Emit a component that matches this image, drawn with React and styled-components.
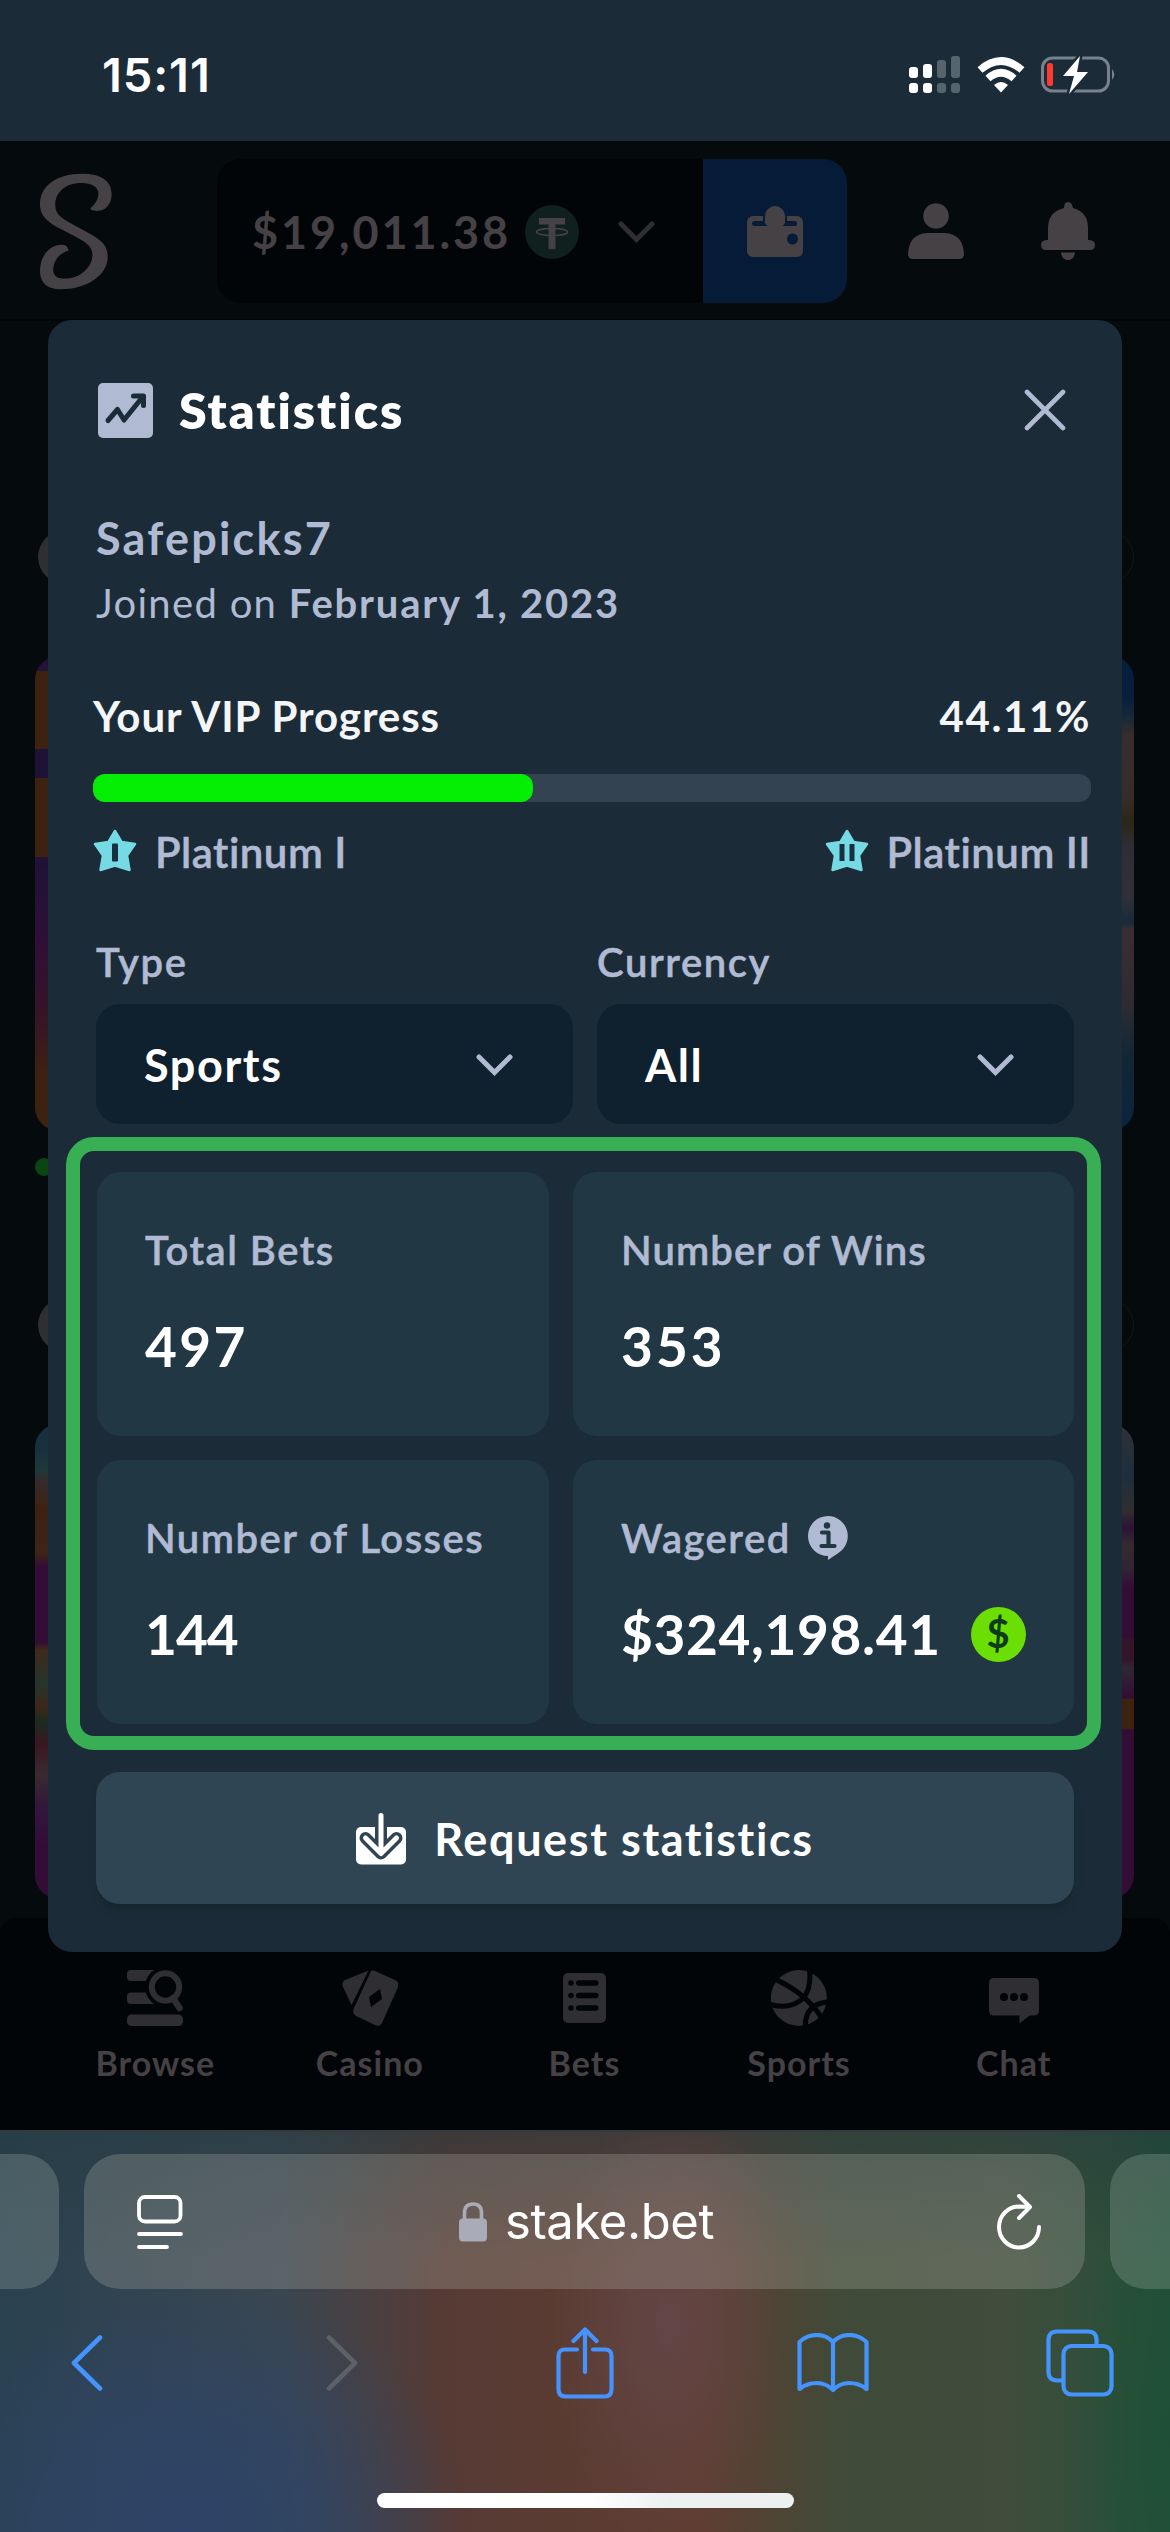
import React from 'react'
import styled, { createGlobalStyle } from 'styled-components'

const App = () =>
    <Page>
        <GlobalStyle />
        <StatusBar>
            <Clock>15:11</Clock>
            <StatusIcons>
                <SignalIcon />
                <WifiIcon />
                <BatteryIcon />
            </StatusIcons>
        </StatusBar>
        <Site>
            <TopBar>
                <LogoIcon />
                <Balance>
                    <Amount>$19,011.38</Amount>
                    <TetherIcon />
                    <Chevron width='37' color='#2e2e33' thick={5} />
                </Balance>
                <WalletButton><WalletIcon /></WalletButton>
                <UserIcon />
                <BellIcon />
            </TopBar>
            <Lobby>
                <LobbyHead><Dot /><Pill /></LobbyHead>
                <GameRow $height={475}>
                    <Game $art={artOne} />
                    <Game $art={artTwo} />
                </GameRow>
                <Online />
                <LobbyHead><Dot /><Pill /></LobbyHead>
                <GameRow $height={475}>
                    <Game $art={artThree} />
                    <Game $art={artFour} />
                </GameRow>
            </Lobby>
            <BottomNav>
                <NavItem><BrowseIcon />Browse</NavItem>
                <NavItem><CasinoIcon />Casino</NavItem>
                <NavItem><BetsIcon />Bets</NavItem>
                <NavItem><SportsIcon />Sports</NavItem>
                <NavItem><ChatIcon />Chat</NavItem>
            </BottomNav>
            <Modal>
                <ModalHeader>
                    <TrendIcon />
                    <Title>Statistics</Title>
                    <CloseIcon />
                </ModalHeader>
                <UserName>Safepicks7</UserName>
                <Joined>Joined on <b>February 1, 2023</b></Joined>
                <Vip>
                    <VipRow>
                        <VipText $spacing={0.9}>Your VIP Progress</VipText>
                        <VipText $spacing={1.6}>44.11%</VipText>
                    </VipRow>
                    <Track><Fill style={{ width: '44.11%' }} /></Track>
                    <VipRow>
                        <Level><StarIcon bars={1} />Platinum I</Level>
                        <Level><StarIcon bars={2} />Platinum II</Level>
                    </VipRow>
                </Vip>
                <Filters>
                    <Field>
                        <Label>Type</Label>
                        <Select>Sports<Chevron width='37' color='#b1bad3' thick={5} /></Select>
                    </Field>
                    <Field>
                        <Label>Currency</Label>
                        <Select>All<Chevron width='37' color='#b1bad3' thick={5} /></Select>
                    </Field>
                </Filters>
                <Highlight>
                    <Card>
                        <CardLabel>Total Bets</CardLabel>
                        <CardValue $spacing={2.4}>497</CardValue>
                    </Card>
                    <Card>
                        <CardLabel $spacing={1.1}>Number of Wins</CardLabel>
                        <CardValue $spacing={3}>353</CardValue>
                    </Card>
                    <Card>
                        <CardLabel>Number of Losses</CardLabel>
                        <CardValue $spacing={-1}>144</CardValue>
                    </Card>
                    <Card>
                        <CardLabel>Wagered<InfoIcon /></CardLabel>
                        <CardValue $spacing={0.6}>$324,198.41<Coin>$</Coin></CardValue>
                    </Card>
                </Highlight>
                <RequestButton><DownloadIcon />Request statistics</RequestButton>
            </Modal>
        </Site>
        <Browser>
            <Tabs>
                <SideTab $side='left' />
                <AddressBar>
                    <ReaderIcon />
                    <Address><LockIcon />stake.bet</Address>
                    <ReloadIcon />
                </AddressBar>
                <SideTab $side='right' />
            </Tabs>
            <Toolbar>
                <BackIcon />
                <ForwardIcon />
                <ShareIcon />
                <BookIcon />
                <TabsIcon />
            </Toolbar>
            <HomeIndicator />
        </Browser>
    </Page>

export default App

const SignalIcon = () =>
    <svg width='52' height='38' viewBox='0 0 52 38'>
        <g fill='#fff'>
            <rect x='0' y='11' width='9' height='11' rx='3' />
            <rect x='14' y='8' width='9' height='14' rx='3' />
            <rect x='0' y='27' width='9' height='10' rx='3' />
            <rect x='14' y='27' width='9' height='10' rx='3' />
        </g>
        <g fill='#55646d'>
            <rect x='28' y='4' width='9' height='18' rx='3' />
            <rect x='42' y='0' width='9' height='22' rx='3' />
            <rect x='28' y='27' width='9' height='10' rx='3' />
            <rect x='42' y='27' width='9' height='10' rx='3' />
        </g>
    </svg>

const WifiIcon = () =>
    <svg width='48' height='36' viewBox='0 0 48 36'>
        <g fill='none' stroke='#fff' strokeWidth='7.5'>
            <path d='M3 13 Q24 -5 45 13' />
            <path d='M11 21.500 Q24 10 37 21.500' />
        </g>
        <path fill='#fff' d='M24 35.500 L17 28 Q24 22 31 28 Z' />
    </svg>

const BatteryIcon = () =>
    <svg width='76' height='40' viewBox='0 0 76 40'>
        <rect x='1.500' y='3' width='66' height='33' rx='10' fill='none' stroke='#78818c' strokeWidth='3' />
        <path d='M71 14 Q75.500 19.500 71 25 Z' fill='#78818c' />
        <rect x='6' y='8' width='6' height='23' rx='2.500' fill='#ff3b30' />
        <path d='M39 1 L22 21 H33 L28 39 L47 17 H36 Z' fill='#fff' stroke='#1b2c38' strokeWidth='5' paintOrder='stroke' strokeLinejoin='round' />
    </svg>

const LogoIcon = () =>
    <svg width='72' height='117' viewBox='60 67 217 350'>
        <path fill='#454144' d='M212 172 C225 160 236 145 236 128 C236 108 215 96 185 96 C135 96 106 125 106 162 C106 195 130 205 180 232 C235 262 264 275 264 318 C264 375 200 416 122 416 C80 416 60 395 60 360 C60 315 90 282 125 282 C138 282 144 288 146 300 C120 305 100 330 100 358 C100 375 112 384 135 384 C180 384 218 350 218 312 C218 285 195 272 150 249 C95 220 60 205 60 160 C60 105 110 68 185 68 C245 68 276 90 276 130 C276 160 258 180 232 180 C220 180 212 178 212 172 Z' />
    </svg>

const TetherIcon = () =>
    <svg width='54' height='54' viewBox='0 0 54 54'>
        <circle cx='27' cy='27' r='27' fill='#10201f' />
        <path d='M14 13 H40 V19.500 H30.500 V44 H23.500 V19.500 H14 Z' fill='#454144' />
        <ellipse cx='27' cy='27' rx='15.500' ry='3.500' fill='none' stroke='#454144' strokeWidth='1.600' />
    </svg>

const Chevron = ({ width, color, thick }) =>
    <svg width={width} height='22' viewBox='0 0 37 22'>
        <path d='M3 3 L18.500 18.500 L34 3' fill='none' stroke={color} strokeWidth={thick} strokeLinecap='round' />
    </svg>

const WalletIcon = () =>
    <svg width='56' height='51' viewBox='0 0 56 51'>
        <rect x='0' y='10' width='56' height='41' rx='6' fill='#454144' />
        <path d='M8 15 H48 Q50 15 50 17.500 Q50 20 48 20 H8 Q5 20 5 17.500 Q5 15 8 15 Z' fill='#051b38' />
        <path d='M16 20 V10 A12 12 0 0 1 40 10 V20 Z' fill='#051b38' />
        <path d='M18 17 V10 A10 10 0 0 1 38 10 V17 Q36 22 28 22 Q20 22 18 17 Z' fill='#454144' />
        <circle cx='45.500' cy='33' r='5.500' fill='#051b38' />
    </svg>

const UserIcon = () =>
    <svg width='56' height='56' viewBox='0 0 56 56'>
        <circle cx='28' cy='13' r='12.800' fill='#454144' />
        <path d='M19 30 H37 Q55 31 56 51 Q56 56 51 56 H5 Q0 56 0 51 Q1 31 19 30 Z' fill='#454144' />
    </svg>

const BellIcon = () =>
    <svg width='54' height='58' viewBox='0 0 54 58'>
        <path d='M23 6 Q23 0 27 0 Q31 0 32 6 Q47 10 47 26 V38 Q54 38 54 43 Q54 48 49 48 H5 Q0 48 0 43 Q0 38 7 38 V26 Q7 10 23 6 Z' fill='#454144' />
        <path d='M20 50.500 H34 Q33 58 27 58 Q21 58 20 50.500 Z' fill='#454144' />
    </svg>

const BrowseIcon = () =>
    <svg width='56' height='56' viewBox='0 0 56 56'>
        <rect x='0' y='0' width='30' height='11' rx='4' fill='#2e2e33' />
        <rect x='0' y='22.500' width='30' height='11.500' rx='4' fill='#2e2e33' />
        <rect x='0' y='44.500' width='56' height='11.500' rx='4.500' fill='#2e2e33' />
        <circle cx='38.500' cy='17' r='20.500' fill='#020507' />
        <circle cx='38.500' cy='17' r='13.700' fill='none' stroke='#2e2e33' strokeWidth='6' />
        <path d='M46 28 L52.500 38' stroke='#2e2e33' strokeWidth='6.500' strokeLinecap='round' />
    </svg>

const CasinoIcon = () =>
    <svg width='56' height='56' viewBox='0 0 56 56'>
        <path d='M26.500 0.500 L3 10 Q-1 12 1 17 L9.500 35 Z' fill='#2e2e33' />
        <path fillRule='evenodd' d='M29 1 Q31 0 33 1 L53 10 Q57.500 12 56 17 L40 53 Q38 57 34 55.500 L14 46 Q10 44 11.500 39 Z M38 19 L27 27 L29 37 L40 29 Z' fill='#2e2e33' />
    </svg>

const BetsIcon = () =>
    <svg width='43' height='56' viewBox='0 -3 43 56'>
        <rect width='43' height='50' rx='5' fill='#2e2e33' />
        <g fill='#020507'>
            {[10, 22.500, 35].map(y => <g key={y}>
                <circle cx='8' cy={y} r='2.800' />
                <rect x='13' y={y - 2.700} width='22.500' height='5.400' rx='2.700' />
            </g>)}
        </g>
    </svg>

const SportsIcon = () =>
    <svg width='56' height='56' viewBox='760 60 167 167'>
        <circle cx='843' cy='143.500' r='83.500' fill='#2e2e33' />
        <g fill='none' stroke='#020507' strokeWidth='15'>
            <path d='M774 88 Q865 130 912 204' />
            <path d='M874 55 Q882 110 858 142 Q820 180 758 163' />
            <path d='M862 232 Q860 160 932 155' />
        </g>
    </svg>

const ChatIcon = () =>
    <svg width='50' height='56' viewBox='0 -8 50 56'>
        <path d='M5 0 H45 Q50 0 50 5 V32 Q50 37.500 45 37.500 H40.500 L30.500 45.500 V37.500 H5 Q0 37.500 0 32 V5 Q0 0 5 0 Z' fill='#2e2e33' />
        <g fill='#020507'>
            <circle cx='15' cy='19' r='4' />
            <circle cx='25' cy='19' r='4' />
            <circle cx='35' cy='19' r='4' />
        </g>
    </svg>

const TrendIcon = () =>
    <svg width='55' height='55' viewBox='0 0 55 55'>
        <rect width='55' height='55' rx='5' fill='#b1bad3' />
        <path d='M10 37.500 L19.500 26.500 L26 37 L43 16' fill='none' stroke='#1b2c38' strokeWidth='5' strokeLinecap='round' strokeLinejoin='round' />
        <path d='M35.500 13 H45.500 V22.500' fill='none' stroke='#1b2c38' strokeWidth='5' strokeLinecap='round' strokeLinejoin='round' />
    </svg>

const CloseIcon = () =>
    <svg width='42' height='42' viewBox='0 0 42 42'>
        <path d='M3 3 L39 39 M39 3 L3 39' stroke='#b1bad3' strokeWidth='4.600' strokeLinecap='round' />
    </svg>

const StarIcon = ({ bars }) =>
    <svg width='44' height='43' viewBox='0 0 44 43'>
        <path d='M22 2 L28.500 13 L42 15 L34 26.500 L36.500 41 L22 36.500 L7.500 41 L10 26.500 L2 15 L15.500 13 Z' fill='#76dae5' stroke='#76dae5' strokeWidth='2.500' strokeLinejoin='round' />
        {bars === 1
            ? <rect x='19' y='14.500' width='6' height='18' rx='1' fill='#17303f' />
            : <path d='M14.500 15 H19.500 V32 H14.500 Z M24.500 15 H29.500 V32 H24.500 Z' fill='#17303f' />}
    </svg>

const InfoIcon = () =>
    <svg width='40' height='44' viewBox='0 0 40 44'>
        <path d='M20 0 A20 20 0 0 1 30 37.200 L20 44 L20 40 A20 20 0 0 1 20 0 Z' fill='#b1bad3' />
        <circle cx='19' cy='9.500' r='3.200' fill='#213743' />
        <path d='M14 16.500 H20.500 V29.500 M13.500 30 H26.500' fill='none' stroke='#213743' strokeWidth='4.200' strokeLinecap='round' strokeLinejoin='round' />
    </svg>

const DownloadIcon = () =>
    <svg width='50' height='52' viewBox='0 0 50 52'>
        <rect y='14' width='50' height='37.500' rx='5' fill='#fff' />
        <path d='M25 11 V38 M9.500 25 L25 40.500 L40.500 25' fill='none' stroke='#2f4553' strokeWidth='12' strokeLinecap='round' strokeLinejoin='round' />
        <path d='M25 2.500 V38 M9.500 25 L25 40.500 L40.500 25' fill='none' stroke='#fff' strokeWidth='5' strokeLinecap='round' strokeLinejoin='round' />
    </svg>

const ReaderIcon = () =>
    <svg width='46' height='54' viewBox='0 0 46 54'>
        <rect x='2' y='2' width='41.500' height='24.500' rx='6' fill='none' stroke='#fff' strokeWidth='3.800' />
        <path d='M2 39 H44 M2 52 H30' stroke='#fff' strokeWidth='3.800' strokeLinecap='round' />
    </svg>

const LockIcon = () =>
    <svg width='28' height='40' viewBox='0 0 28 40'>
        <path d='M5.500 19 V11 Q5.500 2 14 2 Q22.500 2 22.500 11 V19' fill='none' stroke='#a9acb8' strokeWidth='3.600' />
        <rect y='16.500' width='28' height='23' rx='4' fill='#a9acb8' />
    </svg>

const ReloadIcon = () =>
    <svg width='46' height='56' viewBox='0 0 46 56'>
        <g fill='none' stroke='#fff' strokeWidth='4' strokeLinecap='round'>
            <path d='M42 33 A20 20.500 0 1 1 22 12.500 L32 13' />
            <path d='M22 2 L33 13 L22 24' strokeLinejoin='round' />
        </g>
    </svg>

const BackIcon = () =>
    <svg width='32' height='56' viewBox='0 0 32 56'>
        <path d='M29 2.500 L3 28 L29 53.500' fill='none' stroke='#4594fe' strokeWidth='4.600' strokeLinecap='round' strokeLinejoin='round' />
    </svg>

const ForwardIcon = () =>
    <svg width='32' height='56' viewBox='0 0 32 56'>
        <path d='M3 2.500 L29 28 L3 53.500' fill='none' stroke='#5c6067' strokeWidth='4.600' strokeLinecap='round' strokeLinejoin='round' />
    </svg>

const ShareIcon = () =>
    <svg width='58' height='72' viewBox='0 0 58 72'>
        <g fill='none' stroke='#4594fe' strokeWidth='4.200' strokeLinecap='round' strokeLinejoin='round'>
            <path d='M21 22.500 H9 Q2.500 22.500 2.500 29 V62 Q2.500 69.500 9 69.500 H49 Q55.500 69.500 55.500 62 V29 Q55.500 22.500 49 22.500 H37' />
            <path d='M29 45 V3 M17.500 14 L29 2.500 L40.500 14' />
        </g>
    </svg>

const BookIcon = () =>
    <svg width='72' height='60' viewBox='0 0 72 60'>
        <path d='M36 9 Q29 2 20 2 Q10 2 2.500 9 V56 Q10 50 20 50 Q29 50 36 57 Q43 50 52 50 Q62 50 69.500 56 V9 Q62 2 52 2 Q43 2 36 9 Z M36 9 V57' fill='none' stroke='#4594fe' strokeWidth='4.200' strokeLinejoin='round' />
    </svg>

const TabsIcon = () =>
    <svg width='68' height='68' viewBox='0 0 68 68'>
        <g fill='none' stroke='#4594fe' strokeWidth='4.200'>
            <rect x='17.500' y='17' width='48' height='48.500' rx='8' />
            <path d='M17.500 51.500 H11 Q2.500 51.500 2.500 43 V11 Q2.500 2.500 11 2.500 H42 Q50.500 2.500 50.500 11 V17' />
        </g>
    </svg>

const artOne = 'linear-gradient(#25123a 0 15px, #3d2211 15px 93px, #1e1236 93px 122px, #3d2211 122px 201px, #1e1236 201px, #300f35 290px, #351426 360px, #3d2211 420px)'
const artTwo = 'linear-gradient(#061f3c 0 40px, #14273a 58px, #372d2c 80px, #362d2b 140px, #2c2618 165px, #2f2d34 190px, #30303a 240px, #172b39 266px, #3a2e33 274px, #2d2b33 350px, #112735 400px, #0b2340)'
const artThree = 'linear-gradient(#18303e 0 24px, #1d3937 46px, #352a2c 58px, #3d2211 84px, #3d2419 130px, #330d35 142px 218px, #3d2a1b 226px, #27352c 260px, #3b2818 284px, #1c2b20 298px, #3a1622 320px, #3a2a30 350px, #33183a 380px, #330d35 420px)'
const artFour = 'linear-gradient(#303038, #1d2f3d 50px, #302e30 86px, #2c1435 104px, #352b2e 122px, #332235 146px, #330d35 164px 214px, #35152a 216px 236px, #302733 244px, #330d35 274px, #3d2211 275px 304px, #330d35 306px)'

const GlobalStyle = createGlobalStyle`
    body {
        margin: 0;
        background-color: #050a0d;
        font-family: Lato, 'Open Sans', sans-serif;
        font-variant-ligatures: none;
        -webkit-font-smoothing: antialiased;
    }

    * {
        box-sizing: border-box;
    }

    svg {
        display: block;
        flex-shrink: 0;
    }
`

const Page = styled.div`
    width: 1170px;
    height: 2532px;
    display: flex;
    flex-direction: column;
    overflow: hidden;
    white-space: nowrap;
`

const StatusBar = styled.div`
    height: 141px;
    padding: 8px 53px 0 102px;
    background-color: #1b2c38;
    display: flex;
    align-items: center;
    justify-content: space-between;
`

const Clock = styled.span`
    font-family: Inter, sans-serif;
    font-size: 47px;
    font-weight: 600;
    letter-spacing: .9px;
    color: #fff;
`

const StatusIcons = styled.div`
    display: flex;
    align-items: center;
    gap: 16px;
`

const Site = styled.div`
    position: relative;
    height: 1989px;
    display: flex;
    flex-direction: column;
    background-color: #050a0d;
`

const TopBar = styled.header`
    height: 180px;
    padding: 2px 75px 0 40px;
    display: flex;
    align-items: center;
    border-bottom: 2px solid #030608;

    > svg:last-child {
        margin-left: 77px;
    }

    > button + svg {
        margin-left: 61px;
    }
`

const Balance = styled.div`
    width: 486px;
    height: 144px;
    margin-left: 105px;
    padding: 2px 48px 0 35px;
    display: flex;
    align-items: center;
    background-color: #020507;
    border-radius: 24px 0 0 24px;

    > svg:last-child {
        margin-left: auto;
    }
`

const Amount = styled.span`
    margin-right: 14px;
    font-size: 45px;
    font-weight: 700;
    letter-spacing: 2.9px;
    color: #454144;
`

const WalletButton = styled.button`
    width: 144px;
    height: 144px;
    padding: 0;
    border: 0;
    border-radius: 0 24px 24px 0;
    background-color: #051b38;
    display: flex;
    align-items: center;
    justify-content: center;
`

const Lobby = styled.div`
    flex: 1;
    padding: 209px 36px 0 35px;
`

const LobbyHead = styled.div`
    height: 54px;
    padding-left: 3px;
    display: flex;
    align-items: center;
    justify-content: space-between;
`

const Dot = styled.span`
    width: 54px;
    height: 54px;
    border-radius: 50%;
    background-color: #2e2e33;
`

const Pill = styled.span`
    width: 180px;
    height: 54px;
    border: 1px solid #13181b;
    border-radius: 27px;
`

const GameRow = styled.div`
    height: ${props => props.$height}px;
    margin-top: 72px;
    display: flex;
    justify-content: space-between;
`

const Game = styled.div`
    width: 350px;
    border-radius: 24px;
    background: ${props => props.$art};
`

const Online = styled.div`
    width: 18px;
    height: 18px;
    margin: 27px 0 122px;
    border-radius: 50%;
    background-color: #0a4512;
`

const BottomNav = styled.nav`
    height: 212px;
    padding: 52px 49px 0 48px;
    display: flex;
    background-color: #020507;
    border-radius: 16px 16px 0 0;
`

const NavItem = styled.div`
    flex: 1;
    display: flex;
    flex-direction: column;
    align-items: center;
    gap: 17px;
    font-size: 34px;
    font-weight: 700;
    line-height: 40px;
    letter-spacing: 1px;
    color: #454144;
`

const Modal = styled.section`
    position: absolute;
    top: 179px;
    left: 48px;
    width: 1074px;
    height: 1632px;
    padding: 0 48px;
    border-radius: 24px;
    background-color: #1b2c38;
    color: #b1bad3;
`

const ModalHeader = styled.div`
    height: 180px;
    margin-bottom: 8px;
    padding-left: 2px;
    display: flex;
    align-items: center;
    gap: 26px;

    > svg:last-child {
        margin: 0 8px 0 auto;
    }
`

const Title = styled.h1`
    margin: 0;
    font-size: 50px;
    font-weight: 800;
    letter-spacing: 2px;
    color: #fff;
`

const UserName = styled.div`
    font-size: 45px;
    font-weight: 700;
    line-height: 60px;
    letter-spacing: 2.2px;
`

const Joined = styled.div`
    margin-top: 5px;
    font-size: 40px;
    line-height: 60px;
    letter-spacing: 1.3px;

    b {
        font-weight: 700;
        letter-spacing: 1.8px;
    }
`

const Vip = styled.div`
    margin: 55px -17px 0 -3px;
`

const VipRow = styled.div`
    display: flex;
    justify-content: space-between;
    line-height: 56px;
`

const VipText = styled.span`
    font-size: 42px;
    font-weight: 700;
    letter-spacing: ${props => props.$spacing}px;
    color: #f4f5f7;
`

const Track = styled.div`
    height: 28px;
    margin: 30px 0 22px;
    border-radius: 12px;
    background-color: #334351;
`

const Fill = styled.div`
    height: 28px;
    border-radius: 12px;
    background-color: #04ee04;
`

const Level = styled.span`
    display: flex;
    align-items: center;
    gap: 18px;
    font-size: 42px;
    font-weight: 600;
    letter-spacing: .5px;
    -webkit-text-stroke: .5px;

    > svg {
        margin-bottom: 4px;
    }
`

const Filters = styled.div`
    margin-top: 58px;
    display: flex;
    gap: 24px;
`

const Field = styled.div`
    flex: 1;
`

const Label = styled.div`
    margin-bottom: 18px;
    font-size: 40px;
    font-weight: 600;
    line-height: 48px;
    letter-spacing: 1.6px;
    -webkit-text-stroke: .5px;
`

const Select = styled.div`
    height: 120px;
    padding: 2px 60px 0 48px;
    display: flex;
    align-items: center;
    justify-content: space-between;
    border-radius: 24px;
    background-color: #0f212e;
    font-size: 45px;
    font-weight: 700;
    letter-spacing: 1.6px;
    color: #fff;
`

const Highlight = styled.div`
    margin: 13px -27px 0 -30px;
    padding: 21px 13px 12px 17px;
    border: 14px solid #38ae55;
    border-radius: 28px;
    display: grid;
    grid-template-columns: 452px 1fr;
    grid-auto-rows: 264px;
    gap: 24px;
`

const Card = styled.div`
    padding: 54px 0 0 48px;
    border-radius: 24px;
    background-color: #213743;
`

const CardLabel = styled.div`
    display: flex;
    align-items: center;
    gap: 17px;
    font-size: 40px;
    font-weight: 600;
    line-height: 48px;
    letter-spacing: ${props => props.$spacing || 1.5}px;
    -webkit-text-stroke: .5px;
`

const CardValue = styled.div`
    margin-top: 42px;
    display: flex;
    align-items: center;
    gap: 30px;
    font-size: 55px;
    font-weight: 700;
    line-height: 60px;
    letter-spacing: ${props => props.$spacing}px;
    color: #fff;
`

const Coin = styled.span`
    width: 55px;
    height: 55px;
    border-radius: 50%;
    background-color: #6bdf04;
    color: #0b3b1b;
    font-size: 40px;
    line-height: 53px;
    letter-spacing: 0;
    text-align: center;
`

const RequestButton = styled.button`
    width: 100%;
    height: 132px;
    margin-top: 22px;
    padding: 2px 0 0;
    border: 0;
    border-radius: 24px;
    background-color: #2f4553;
    box-shadow: 0 8px 12px -4px rgba(0, 0, 0, .22);
    display: flex;
    align-items: center;
    justify-content: center;
    gap: 28px;
    font-family: inherit;
    font-size: 45px;
    font-weight: 700;
    letter-spacing: 1.6px;
    color: #fff;
`

const Browser = styled.footer`
    flex: 1;
    border-top: 2px solid #353a3e;
    background:
        radial-gradient(ellipse 90px 300px at 1170px 300px, #1f5035, transparent),
        radial-gradient(ellipse 120px 230px at 670px 190px, rgba(100, 72, 76, .75), transparent),
        radial-gradient(ellipse 280px 250px at 190px 400px, #2d4468, rgba(45, 68, 104, .7) 45%, transparent),
        linear-gradient(rgba(35, 57, 62, .5), transparent 130px),
        linear-gradient(90deg, #2a4150 0, #3a4650 24%, #563a34 38%, #5f3d31 60%, #3f4a38 72%, #404d3c 86%, #235038);
`

const Tabs = styled.div`
    height: 157px;
    padding-top: 22px;
    display: flex;
    justify-content: space-between;
`

const SideTab = styled.div`
    width: ${props => props.$side === 'left' ? 59 : 60}px;
    height: 135px;
    border-radius: ${props => props.$side === 'left' ? '0 36px 36px 0' : '36px 0 0 36px'};
    background-color: rgba(165, 180, 175, .27);
`

const AddressBar = styled.div`
    width: 1001px;
    height: 135px;
    padding: 0 42px 0 53px;
    display: flex;
    align-items: center;
    justify-content: space-between;
    border-radius: 36px;
    background-color: rgba(180, 180, 170, .27);
`

const Address = styled.div`
    margin-right: 7px;
    display: flex;
    align-items: center;
    gap: 18px;
    font-family: Inter, sans-serif;
    font-size: 49px;
    letter-spacing: -.4px;
    color: #fff;
`

const Toolbar = styled.div`
    height: 148px;
    padding-left: 71px;
    display: grid;
    grid-template-columns: 255px 230px 241px 249px 68px;
    align-items: center;
`

const HomeIndicator = styled.div`
    width: 417px;
    height: 15px;
    margin: 56px auto 0;
    border-radius: 8px;
    background: linear-gradient(90deg, #fff 50%, #ecf0f1 70%);
`
